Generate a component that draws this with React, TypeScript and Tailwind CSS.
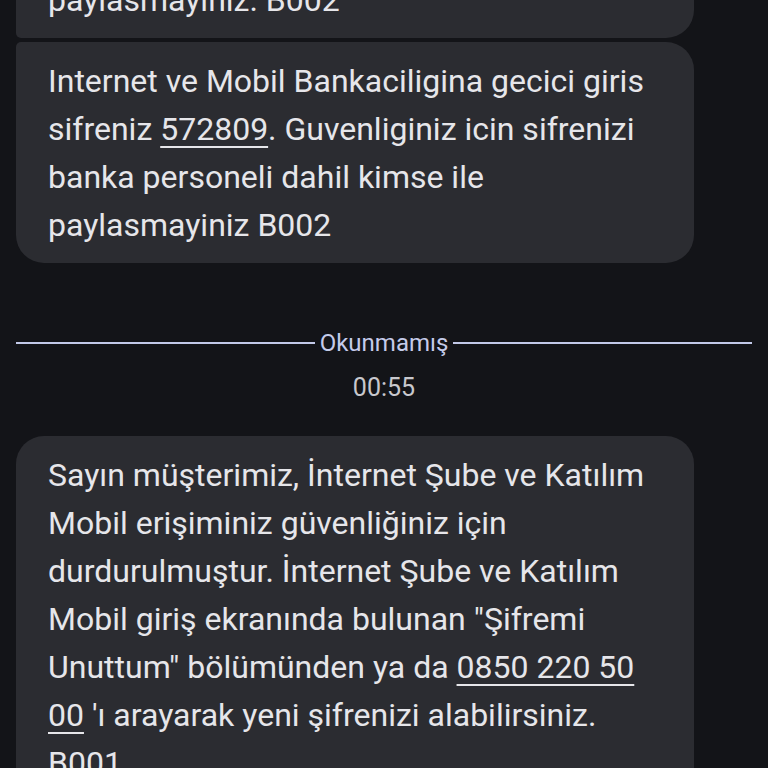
import type { ReactNode } from 'react';

const font = { fontFamily: 'Roboto, "Noto Sans", sans-serif' };

interface BubbleProps {
  className?: string;
  children: ReactNode;
}

function Bubble({ className = '', children }: BubbleProps) {
  return (
    <div
      className={`w-[678px] bg-[#2b2c31] px-8 pt-[15px] pb-[14px] text-[32px] leading-[48px] text-[#e6e6ea] ${className}`}
    >
      {children}
    </div>
  );
}

function Link({ children }: { children: ReactNode }) {
  return <span className="underline decoration-2 underline-offset-[6px]">{children}</span>;
}

export default function App() {
  return (
    <div className="h-[768px] w-[768px] overflow-hidden bg-[#131418]" style={font}>
      <div className="flex flex-col px-4">
        {/* previous message, scrolled mostly out of view */}
        <Bubble className="-mt-[39px] rounded-tl-[5px] rounded-bl-[5px] rounded-tr-[28px] rounded-br-[28px]">
          paylasmayiniz. B002
        </Bubble>

        <Bubble className="mt-[4px] rounded-tl-[5px] rounded-tr-[28px] rounded-bl-[28px] rounded-br-[28px]">
          Internet ve Mobil Bankaciligina gecici giris sifreniz <Link>572809</Link>. Guvenliginiz icin
          sifrenizi banka personeli dahil kimse ile paylasmayiniz B002
        </Bubble>

        <div className="mt-[65px] flex h-[30px] items-center gap-[5px]">
          <div className="h-[2px] flex-1 bg-[#c2c9e8]" />
          <span className="text-[24px] leading-[30px] text-[#c5cbea]">Okunmamış</span>
          <div className="h-[2px] flex-1 bg-[#c2c9e8]" />
        </div>

        <div className="mt-[15px] text-center text-[25px] leading-[30px] text-[#c8c8cd]">00:55</div>

        <Bubble className="mt-[33px] rounded-[28px]">
          Sayın müşterimiz, İnternet Şube ve Katılım Mobil erişiminiz güvenliğiniz için durdurulmuştur.
          İnternet Şube ve Katılım Mobil giriş ekranında bulunan "Şifremi Unuttum" bölümünden ya da{' '}
          <Link>0850 220 50 00</Link> 'ı arayarak yeni şifrenizi alabilirsiniz. B001
        </Bubble>
      </div>
    </div>
  );
}
